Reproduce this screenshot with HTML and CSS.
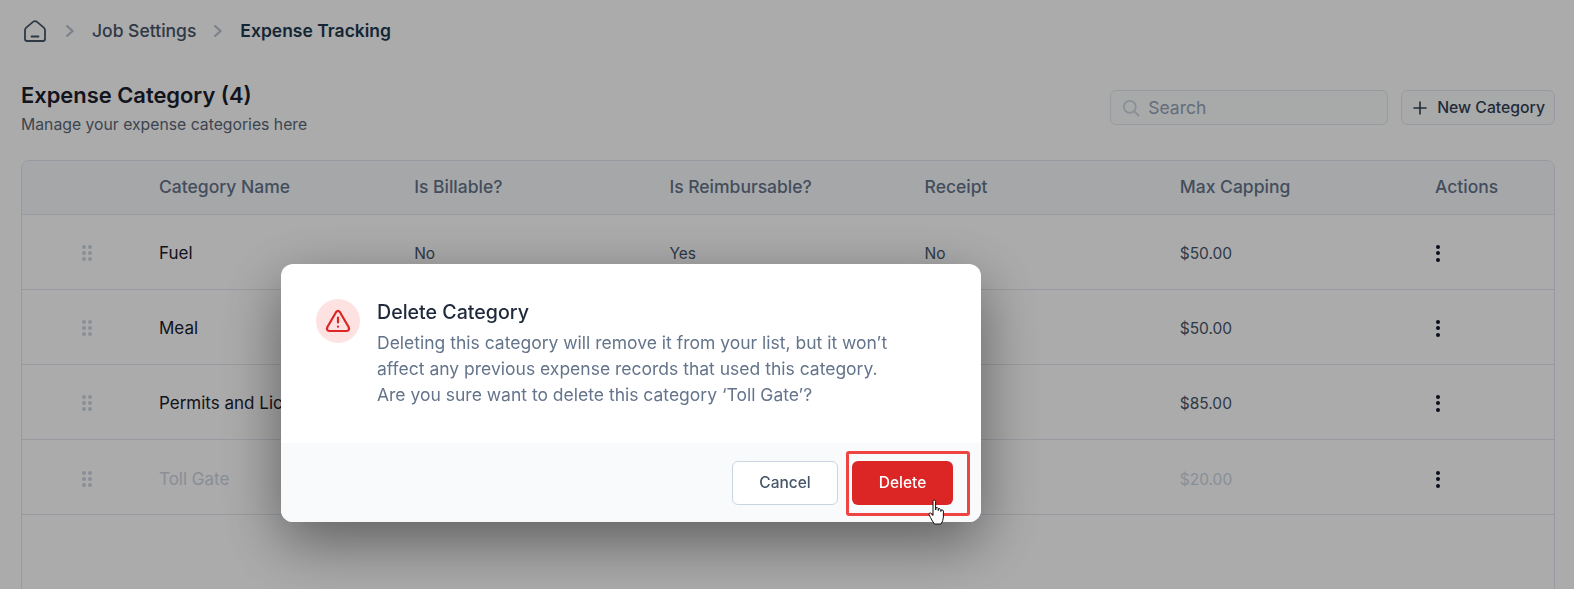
FILE: index.html
```html
<!DOCTYPE html>
<html lang="en">
<head>
    <meta charset="UTF-8">
    <title>Expense Tracking</title>
    <link rel="stylesheet" href="styles.css">
</head>
<body>
    <nav class="crumbs">
        <svg class="home-icon" width="26" height="26" viewBox="0 0 26 26" fill="none" stroke="#475569" stroke-width="1.8" stroke-linejoin="round" stroke-linecap="round">
            <path d="M3 12.2 Q3 10.6 4.2 9.6 L11 3.9 Q13 2.3 15 3.9 L21.8 9.6 Q23 10.6 23 12.2 V21 Q23 23 21 23 H5 Q3 23 3 21 Z"/>
            <path d="M9.5 18.5 H16.5"/>
        </svg>
        <svg class="chev" width="10" height="14" viewBox="0 0 10 14" fill="none" stroke="#b8c2d0" stroke-width="2.2"><path d="M1.5 1.5 L7.5 7 L1.5 12.5"/></svg>
        <span class="crumb">Job Settings</span>
        <svg class="chev" width="10" height="14" viewBox="0 0 10 14" fill="none" stroke="#b8c2d0" stroke-width="2.2"><path d="M1.5 1.5 L7.5 7 L1.5 12.5"/></svg>
        <span class="crumb current">Expense Tracking</span>
    </nav>

    <header class="page-head">
        <div>
            <h1>Expense Category (4)</h1>
            <p>Manage your expense categories here</p>
        </div>
        <div class="tools">
            <div class="search">
                <svg width="20" height="20" viewBox="0 0 20 20" fill="none" stroke="#cbd5e1" stroke-width="1.8" stroke-linecap="round"><circle cx="8.8" cy="8.8" r="6"/><path d="M13.3 13.3 L17.5 17.5"/></svg>
                <span>Search</span>
            </div>
            <button class="new-btn">
                <svg width="14" height="14" viewBox="0 0 14 14" fill="none" stroke="#334155" stroke-width="1.6" stroke-linecap="round"><path d="M7 1 V13 M1 7 H13"/></svg>
                New Category
            </button>
        </div>
    </header>

    <section class="table">
        <div class="row head">
            <div></div>
            <div>Category Name</div>
            <div>Is Billable?</div>
            <div>Is Reimbursable?</div>
            <div>Receipt</div>
            <div>Max Capping</div>
            <div>Actions</div>
        </div>
        <div class="row">
            <div class="grip"><i></i><i></i><i></i><i></i><i></i><i></i></div>
            <div class="name">Fuel</div>
            <div>No</div>
            <div>Yes</div>
            <div>No</div>
            <div>$50.00</div>
            <div class="dots"><i></i><i></i><i></i></div>
        </div>
        <div class="row">
            <div class="grip"><i></i><i></i><i></i><i></i><i></i><i></i></div>
            <div class="name">Meal</div>
            <div></div>
            <div></div>
            <div></div>
            <div>$50.00</div>
            <div class="dots"><i></i><i></i><i></i></div>
        </div>
        <div class="row">
            <div class="grip"><i></i><i></i><i></i><i></i><i></i><i></i></div>
            <div class="name">Permits and Licenses</div>
            <div></div>
            <div></div>
            <div></div>
            <div>$85.00</div>
            <div class="dots"><i></i><i></i><i></i></div>
        </div>
        <div class="row faded">
            <div class="grip"><i></i><i></i><i></i><i></i><i></i><i></i></div>
            <div class="name">Toll Gate</div>
            <div></div>
            <div></div>
            <div></div>
            <div>$20.00</div>
            <div class="dots"><i></i><i></i><i></i></div>
        </div>
    </section>

    <div class="overlay">
        <div class="modal">
            <div class="modal-body">
                <div class="warn">
                    <svg width="26" height="26" viewBox="0 0 26 26" fill="none" stroke="#dc2626" stroke-width="2.2" stroke-linecap="round" stroke-linejoin="round">
                        <path d="M11 4.2 Q13 1.4 15 4.2 L23.6 19 Q25 22.6 21.6 23 H4.4 Q1 22.6 2.4 19 Z"/>
                        <path d="M13 9.5 V14.5 M13 18.6 V18.7"/>
                    </svg>
                </div>
                <div class="modal-text">
                    <h2>Delete Category</h2>
                    <p>Deleting this category will remove it from your list, but it won’t<br>affect any previous expense records that used this category.<br>Are you sure want to delete this category ‘Toll Gate’?</p>
                </div>
            </div>
            <div class="modal-foot">
                <button class="cancel">Cancel</button>
                <button class="delete">Delete</button>
            </div>
            <div class="callout"></div>
            <svg class="cursor" width="20" height="27" viewBox="0 0 20 27" fill="#fff" stroke="#111" stroke-width="1" stroke-linejoin="round">
                <path d="M5 2.5 Q5 1 6.3 1 Q7.6 1 7.6 2.5 V11 L8 8.8 Q9.6 8 10.2 9.4 V11.5 L10.6 9.8 Q12.2 9.2 12.8 10.6 V12.5 L13.2 11 Q15 10.4 15.4 12 V18 Q15.2 22 13 25 H6.5 Q4.5 22.5 2.5 18.5 L1 15.5 Q0.8 13.8 2.4 14 L5 16.5 Z"/>
            </svg>
        </div>
    </div>
</body>
</html>
```

FILE: styles.css
```css
* {
    box-sizing: border-box;
}

html, body {
    height: 100%;
}

body {
    margin: 0;
    padding: 0 19px 0 21px;
    overflow: hidden;
    background: #fff;
    font-family: Inter, "Liberation Sans", sans-serif;
    color: #1e293b;
}

.crumbs {
    display: flex;
    align-items: center;
    height: 61px;
    font-size: 17.5px;
    font-weight: 500;
}

.home-icon {
    margin-left: 1px;
    margin-right: 17px;
}

.chev {
    margin-right: 17px;
}

.crumb {
    margin-right: 17px;
    color: #475569;
}

.crumb.current {
    color: #1e3a4f;
    font-weight: 600;
}

.page-head {
    display: flex;
    justify-content: space-between;
    align-items: flex-start;
    height: 99px;
    padding-top: 20px;
}

h1 {
    margin: 0;
    font-size: 21.9px;
    line-height: 28px;
    font-weight: 600;
    color: #1a202c;
}

.page-head p {
    margin: 6px 0 0;
    font-size: 15.75px;
    line-height: 20px;
    color: #5b6778;
}

.tools {
    display: flex;
    gap: 13px;
    margin-top: 9px;
}

.search {
    display: flex;
    align-items: center;
    gap: 7px;
    width: 278px;
    height: 35px;
    padding: 0 10px;
    border: 1px solid #e2e8f0;
    border-radius: 6px;
    background: #fbfcfd;
    font-size: 17.5px;
    color: #94a3b8;
}

.new-btn {
    display: flex;
    align-items: center;
    gap: 10px;
    height: 35px;
    padding: 0 9px 0 11px;
    border: 1px solid #e2e8f0;
    border-radius: 6px;
    background: #fbfcfd;
    font-family: inherit;
    font-size: 15.75px;
    font-weight: 500;
    color: #334155;
}

.table {
    height: 600px;
    border: 1px solid #e2e8f0;
    border-radius: 8px 8px 0 0;
}

.row {
    display: grid;
    grid-template-columns: 137px repeat(5, 255.2px) 1fr;
    align-items: center;
    height: 75px;
    padding-top: 2px;
    border-bottom: 1px solid #e2e8f0;
    font-size: 15.5px;
    color: #475569;
}

.row.head {
    height: 54px;
    padding: 0 0 2px;
    border-radius: 8px 8px 0 0;
    background: #f8fafc;
    font-size: 17.5px;
    font-weight: 500;
    color: #64748b;
}

.row.faded {
    padding-top: 4px;
}

.name {
    font-size: 17px;
    color: #1a202c;
}

.faded > div {
    color: #cbd5e1;
}

.grip {
    display: grid;
    grid-template-columns: 4px 4px;
    gap: 2px;
    justify-content: start;
    margin-left: 60px;
}

.grip i {
    width: 4px;
    height: 4px;
    border-radius: 50%;
    background: #cbd5e1;
}

.dots {
    display: flex;
    flex-direction: column;
    gap: 2.5px;
    margin-left: 1px;
}

.dots i {
    width: 4px;
    height: 4px;
    border-radius: 50%;
    background: #0f172a;
}

/* modal sits off centre in the capture */
.overlay {
    position: fixed;
    inset: 0;
    padding: 264px 0 0 281px;
    background: rgba(0, 0, 0, 0.33);
}

.modal {
    position: relative;
    width: 700px;
    height: 258px;
    border-radius: 12px;
    background: #fff;
    box-shadow: 0 20px 60px rgba(0, 0, 0, 0.45);
}

.modal-body {
    display: flex;
    gap: 17px;
    height: 179px;
    padding: 35px 35px 0;
}

.modal-text {
    margin-top: -1px;
}

.warn {
    display: flex;
    align-items: center;
    justify-content: center;
    flex: none;
    width: 44px;
    height: 44px;
    border-radius: 50%;
    background: #fee2e2;
}

h2 {
    margin: 0;
    font-size: 19.6px;
    line-height: 28px;
    font-weight: 500;
    color: #1e293b;
}

.modal-body p {
    margin: 4px 0 0;
    font-size: 17.5px;
    line-height: 26px;
    color: #64748b;
}

.modal-foot {
    display: flex;
    justify-content: flex-end;
    gap: 14px;
    height: 79px;
    padding: 18px 28px 0 0;
    border-radius: 0 0 12px 12px;
    background: #f8fafc;
}

.modal-foot button {
    height: 44px;
    padding-bottom: 2px;
    border-radius: 6px;
    font-family: inherit;
    font-size: 15.5px;
    font-weight: 500;
}

.cancel {
    width: 106px;
    border: 1px solid #cbd5e1;
    background: #fff;
    color: #475569;
}

.delete {
    width: 101px;
    border: 0;
    background: #dc2626;
    color: #fff;
}

.callout {
    position: absolute;
    left: 565px;
    top: 187px;
    width: 124px;
    height: 65px;
    border: 3px solid #ef4444;
    border-radius: 3px;
}

.cursor {
    position: absolute;
    left: 647px;
    top: 235px;
}
```
